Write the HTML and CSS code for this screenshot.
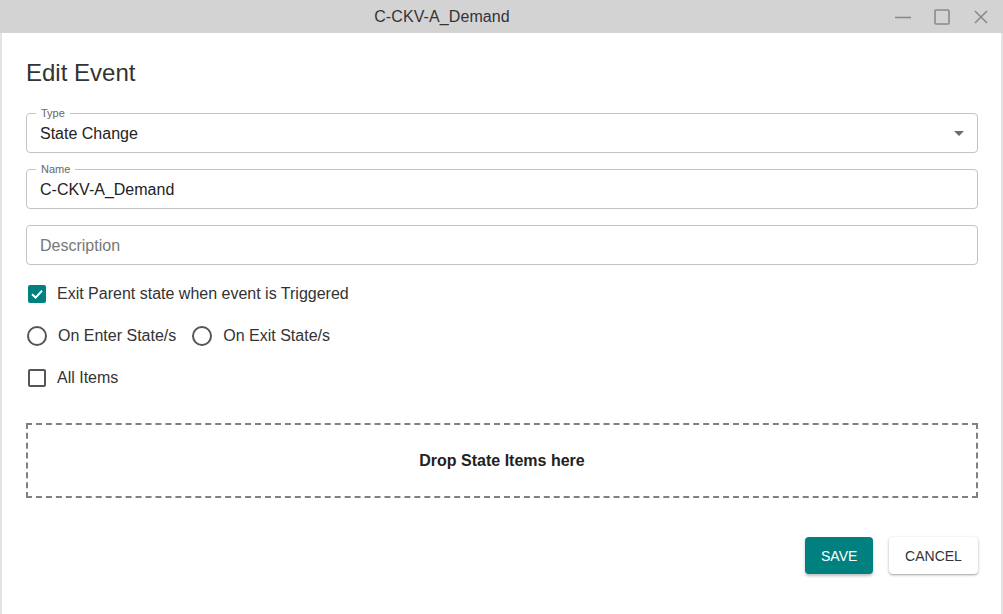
FILE: index.html
```html
<!DOCTYPE html>
<html>
<head>
<meta charset="utf-8">
<link rel="stylesheet" href="styles.css">
</head>
<body>
<div class="window">
  <div class="titlebar">
    <div class="title">C-CKV-A_Demand</div>
    <div class="controls">
      <svg class="ctl" width="18" height="18" viewBox="0 0 18 18"><path d="M1 9.5H17" stroke="#8a8a8a" stroke-width="1.6" fill="none"/></svg>
      <svg class="ctl" width="18" height="18" viewBox="0 0 18 18"><rect x="2" y="2" width="14" height="14" rx="1" stroke="#8a8a8a" stroke-width="1.6" fill="none"/></svg>
      <svg class="ctl" width="18" height="18" viewBox="0 0 18 18"><path d="M3 3L15 15M15 3L3 15" stroke="#8a8a8a" stroke-width="1.6" fill="none"/></svg>
    </div>
  </div>
  <div class="content">
    <h1 class="heading">Edit Event</h1>
    <div class="field">
      <span class="legend">Type</span>
      <span class="value">State Change</span>
      <svg class="caret" width="10" height="5" viewBox="0 0 10 5"><path d="M0 0H10L5 5Z" fill="#6b6b6b"/></svg>
    </div>
    <div class="field">
      <span class="legend">Name</span>
      <span class="value">C-CKV-A_Demand</span>
    </div>
    <div class="field">
      <span class="placeholder">Description</span>
    </div>
    <div class="row check-row">
      <span class="checkbox checked">
        <svg width="18" height="18" viewBox="0 0 18 18"><path d="M4 9.2L7.6 12.6L14 5.8" stroke="#fff" stroke-width="2" fill="none"/></svg>
      </span>
      <span class="label">Exit Parent state when event is Triggered</span>
    </div>
    <div class="row radio-row">
      <span class="radio"></span>
      <span class="label">On Enter State/s</span>
      <span class="radio second"></span>
      <span class="label">On Exit State/s</span>
    </div>
    <div class="row check-row2">
      <span class="checkbox"></span>
      <span class="label">All Items</span>
    </div>
    <div class="dropzone">Drop State Items here</div>
    <div class="actions">
      <button class="btn save">SAVE</button>
      <button class="btn cancel">CANCEL</button>
    </div>
  </div>
</div>
</body>
</html>
```
FILE: styles.css
```css
* { box-sizing: border-box; }
html, body { margin: 0; padding: 0; }
body {
  width: 1003px;
  height: 614px;
  overflow: hidden;
  font-family: "Liberation Sans", Arial, sans-serif;
  background: #fff;
}
.window {
  width: 1003px;
  height: 614px;
  display: flex;
  flex-direction: column;
  border-left: 2px solid #e3e3e3;
  border-right: 2px solid #e3e3e3;
}
.titlebar {
  height: 33px;
  margin: 0 -2px;
  background: #d3d3d3;
  display: flex;
  align-items: center;
  position: relative;
}
.title {
  width: 884px;
  text-align: center;
  font-size: 16px;
  color: #333;
  letter-spacing: 0.1px;
}
.controls {
  display: flex;
  gap: 21px;
  margin-left: 10px;
}
.content {
  padding: 0 23px 0 24px;
  display: flex;
  flex-direction: column;
  flex: 1;
}
.heading {
  margin: 26px 0 0 0;
  font-size: 24px;
  font-weight: normal;
  color: #333;
  line-height: 28px;
  height: 28px;
}
.field {
  margin-top: 16px;
  height: 40px;
  border: 1px solid #c4c4c4;
  border-radius: 4px;
  position: relative;
  display: flex;
  align-items: center;
  padding: 1px 13px 0 13px;
  font-size: 16px;
  color: #222;
}
.heading + .field { margin-top: 26px; }
.legend {
  position: absolute;
  top: -7px;
  left: 9px;
  padding: 0 5px;
  background: #fff;
  font-size: 11px;
  line-height: 12px;
  color: #666;
}
.placeholder { color: #777; }
.caret {
  position: absolute;
  right: 13px;
  top: 17px;
}
.row {
  display: flex;
  align-items: center;
  font-size: 16px;
  color: #333;
}
.check-row { margin-top: 20px; height: 18px; }
.radio-row { margin-top: 23px; height: 20px; }
.check-row2 { margin-top: 23px; height: 18px; }
.checkbox {
  width: 18px;
  height: 18px;
  border: 2px solid #555;
  border-radius: 2px;
  margin-left: 2px;
  flex: none;
  display: flex;
}
.checkbox.checked {
  background: #00807f;
  border: none;
}
.checkbox svg { display: block; }
.label { margin-left: 11px; }
.radio {
  width: 20px;
  height: 20px;
  border: 2px solid #555;
  border-radius: 50%;
  margin-left: 1px;
  flex: none;
}
.radio.second { margin-left: 16px; }
.dropzone {
  margin-top: 36px;
  height: 75px;
  border: 2px dashed #808080;
  display: flex;
  align-items: center;
  justify-content: center;
  font-size: 16px;
  font-weight: bold;
  color: #222;
}
.actions {
  margin-top: 39px;
  display: flex;
  justify-content: flex-end;
  gap: 16px;
}
.btn {
  height: 37px;
  border: none;
  border-radius: 4px;
  font-family: "Liberation Sans", Arial, sans-serif;
  font-size: 14px;
  padding: 0 16px;
  cursor: pointer;
}
.save {
  width: 68px;
  background: #00807f;
  color: #fff;
  box-shadow: 0 2px 3px rgba(0,0,0,0.25);
}
.cancel {
  width: 89px;
  background: #fff;
  color: #333;
  box-shadow: 0 1px 3px rgba(0,0,0,0.3), 0 1px 1px rgba(0,0,0,0.1);
}
```
